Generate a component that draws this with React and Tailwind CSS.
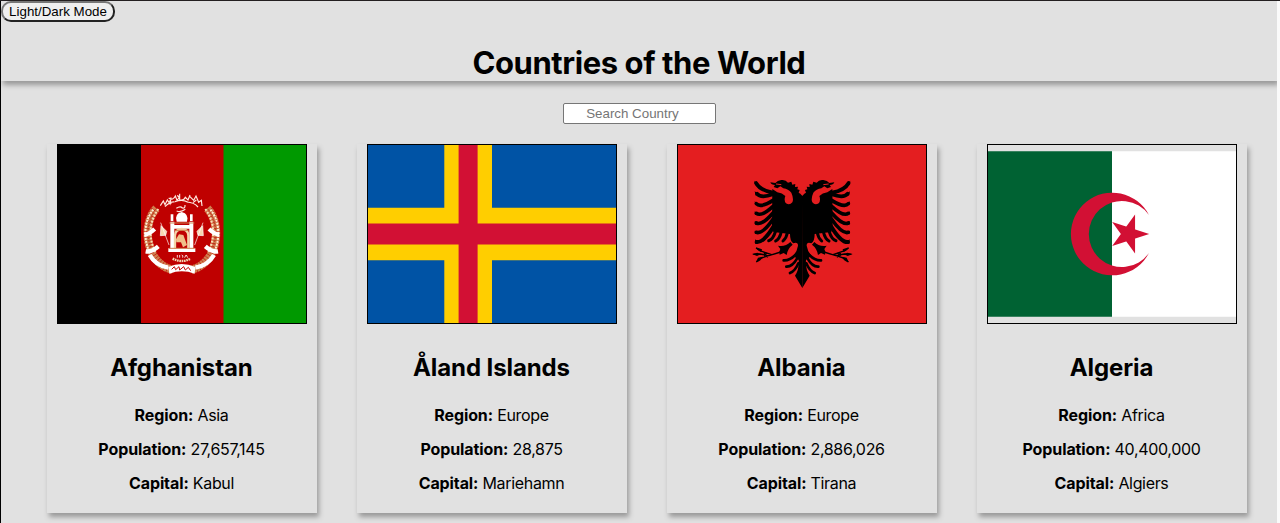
const countries = [
  { name: "Afghanistan", region: "Asia", population: "27,657,145", capital: "Kabul", flag: AfghanFlag },
  { name: "Åland Islands", region: "Europe", population: "28,875", capital: "Mariehamn", flag: AlandFlag },
  { name: "Albania", region: "Europe", population: "2,886,026", capital: "Tirana", flag: AlbaniaFlag },
  { name: "Algeria", region: "Africa", population: "40,400,000", capital: "Algiers", flag: AlgeriaFlag },
];

const flagClass = "block h-[180px] w-[250px] border border-black";

/* One half of the wheat wreath and ribbons; the other half is mirrored. */
function WreathHalf() {
  return (
    <g fill="none" stroke="#fff">
      <path d="M64 70 C38 98 26 155 54 210 Q76 246 112 254" stroke="#cf7f4e" strokeWidth="25" strokeDasharray="8 1.500" />
      <path d="M55 74 C32 100 20 150 45 205" stroke="#fff0d8" strokeWidth="6" strokeDasharray="6 3" />
      <path d="M70 72 C46 105 36 150 62 203" stroke="#f8dfba" strokeWidth="6" strokeDasharray="6 4" />
      <path d="M62 72 C38 105 29 152 54 205" stroke="#b32010" strokeWidth="2" strokeDasharray="5 4" />
      <path d="M28 149 Q42 148 59 132 M32 199 Q50 202 70 184 M44 210 Q62 242 100 248" strokeWidth="13" />
      <path d="M78 122 L95 139 L92 151 L76 152 Z" fill="#f7d7b0" strokeWidth="2" />
      <path d="M77 113 L102 180" strokeWidth="2" />
    </g>
  );
}

function AfghanFlag() {
  return (
    <svg className={flagClass} viewBox="0 0 248 178">
      <path fill="#000" d="M0 0h83v178H0z" />
      <path fill="#bf0000" d="M83 0h83v178H83z" />
      <path fill="#090" d="M165.500 0H248v178h-82.500z" />
      <g transform="translate(77 40) scale(.33333)">
        <WreathHalf />
        <g transform="translate(281 0) scale(-1 1)"><WreathHalf /></g>
        <g fill="none" stroke="#ffe9e0" strokeWidth="3.500">
          <path d="M76 62 l9 -14 5 11 7 -14 8 12 3 -20 M101 39 q13 9 20 -6 l5 13 q12 -11 0 -14 M134 26 v19 q12 3 17 -8 l8 8 6 -15 M164 34 l12 12 7 -13 8 19 8 -6 2 17 M90 65 q16 -16 29 -14 M120 50 q22 -8 38 1 M155 51 q22 1 34 15 M103 47 l6 9 M174 53 l10 -8" />
          <path d="M124 70 q12 -8 18 -1 q9 2 8 -9 M125 78 q12 5 26 -5" />
        </g>
        <g fill="#fff">
          <path d="M100 190 h81 v11 h-81z M106 110 h12 v80 h-12z M163 110 h12 v80 h-12z M107 88 h8 v20 h-8z M165 88 h8 v20 h-8z M118 120 h45 v11 h-45z" />
          <path d="M125 110 Q117 87 140 81 Q163 87 156 110z" />
        </g>
        <path d="M120 190 V151 Q122 133 140 132 Q159 133 160 151 V190" fill="none" stroke="#f2d4a9" strokeWidth="7" />
        <path d="M123 163 l9 -15 13 2 11 30 -12 7 -6 -15 -14 0z" fill="#f0c08a" />
        <path d="M103 114 h75 M119 136 h42 M102 190 h77" stroke="#cf7f4e" strokeWidth="3" />
        <path d="M127 210 v8 m7 -8 v8 m6 -8 q6 1 3 8 m10 -8 l-4 8 m5 -8 l4 8" fill="none" stroke="#fff" strokeWidth="2.500" />
        <path d="M113 221 q28 14 54 0" fill="none" stroke="#f3d8b4" strokeWidth="7" strokeDasharray="5 2" />
        <path d="M100 246 Q140 228 181 246 L179 266 Q140 252 103 266z" fill="#fff" />
        <path d="M110 253 l8 -8 4 9 10 -9 2 10 12 -10 5 10 9 -8 7 10" fill="none" stroke="#bf0000" strokeWidth="3" />
      </g>
    </svg>
  );
}

function AlandFlag() {
  return (
    <svg className={flagClass} viewBox="0 0 248 178">
      <path fill="#0053a5" d="M0 0h248v178H0z" />
      <path fill="#ffce00" d="M76.300 0H124v178H76.300zM0 62.700h248v52.600H0z" />
      <path fill="#d21034" d="M90.600 0h19v178h-19zM0 78.500h248v21H0z" />
    </svg>
  );
}

function EagleHalf() {
  return (
    <g>
      <path d="M188 94 Q180 84 176 83 L179 75 L172 73 L174 65 L165 66 L166 57 L157 59 L154 50 L144 53 Q137 43 124 45 Q112 47 106 54 L91 52 Q94 60 105 60 L101 66 L112 70 L121 64 L130 70 Q145 72 154 83 Q162 101 157 112 Q149 122 138 115 Q131 106 136 93 Q127 84 112 82 L97 72 L96 180 L100 201 L150 207 Q150 229 160 235 Q174 230 174 242 Q172 258 160 272 L176 285 Q178 313 165 332 L187 369z" />
      <path d="M108 57 L124 59" fill="none" stroke="#e41e20" strokeWidth="3" />
      <g fill="none" stroke="#000" strokeWidth="11" strokeLinecap="round">
        <path d="M48 54 Q60 76 98 83 M51 86 Q62 101 99 88 M49 116 Q61 130 99 106 M49 145 Q64 156 99 124 M49 174 Q66 182 99 144 M49 202 Q68 208 99 163" />
        <path d="M50 231 Q70 234 101 184" strokeWidth="12" />
        <path d="M86 227 Q99 224 107 198 M107 228 Q119 222 124 200 M129 228 Q140 218 142 203" strokeWidth="9" />
        <path d="M131 286 Q149 287 166 270 M139 305 Q157 306 171 281 M150 324 Q166 318 175 295" strokeWidth="8" />
      </g>
      <path d="M43 47 L53 56 L46 61z M44 79 L57 88 L47 92z M44 109 L55 117 L46 121z M44 139 L55 146 L46 150z M44 168 L55 176 L46 180z M44 197 L55 204 L46 207z M45 223 L56 232 L46 237z" />
      <path d="M151 231 Q136 246 114 242 L121 252 Q116 260 119 269 L131 264 L140 270 Q143 250 158 239z" />
      <path d="M122 261 L87 272 L61 267 L40 268 M95 269 L62 258 L48 249 M94 269 L59 281 L49 291 M72 264 L83 277 M72 273 L82 263" fill="none" stroke="#000" strokeWidth="4" />
      <path d="M48 247 L66 253 L64 261 Q52 258 48 247 M36 267 L52 263 L62 268 L51 273z M48 292 L54 278 L69 275 Q64 287 48 292" />
    </g>
  );
}

function AlbaniaFlag() {
  return (
    <svg className={flagClass} viewBox="0 0 248 178">
      <path fill="#e41e20" d="M0 0h248v178H0z" />
      <g transform="translate(62 20) scale(.33333)">
        <EagleHalf />
        <g transform="translate(374 0) scale(-1 1)"><EagleHalf /></g>
      </g>
    </svg>
  );
}

function AlgeriaFlag() {
  return (
    <svg className={flagClass} viewBox="0 0 248 178">
      <path fill="#fff" d="M124 6.330h124v165.340H124z" />
      <path fill="#006233" d="M0 6.330h124v165.340H0z" />
      <g transform="translate(124 89) scale(.27556)">
        <path fill="#d21034" d="M134 -69 A150 150 0 1 0 134 69 A120 120 0 1 1 134 -69" />
        <path fill="#d21034" d="M135 0 L0.600 43.700 L83.700 -70.600 V70.600 L0.600 -43.700z" />
      </g>
    </svg>
  );
}

function Field({ label, value }) {
  return (
    <p className="mb-4 pr-px text-base leading-[18px] tracking-[-0.33px]">
      <b className="tracking-[-0.1px]">{label}:</b> {value}
    </p>
  );
}

function CountryCard({ country }) {
  const Flag = country.flag;
  return (
    <article className="h-[369px] w-[270px] px-[10px] text-center shadow-[2px_4px_5px_#999]">
      <Flag />
      <h2 className="mt-[30px] mb-[24px] pr-px text-2xl leading-[28px] font-bold tracking-[-0.1px]">{country.name}</h2>
      <Field label="Region" value={country.region} />
      <Field label="Population" value={country.population} />
      <Field label="Capital" value={country.capital} />
    </article>
  );
}

export default function App() {
  return (
    <div className="h-[523px] overflow-hidden bg-[#fafafa] pr-[3px] font-['Inter',sans-serif] text-black">
      <div className="-mr-[3px] h-px bg-[#231f20]" />
      <main className="h-[522px] overflow-hidden border-l border-black bg-[#e1e1e1]">
        <header className="h-[80px] shadow-[2px_4px_5px_#999]">
          <button className="block h-[21px] w-[114px] rounded-[10px] border-2 border-[#222] border-t-[#767676] border-l-[#767676] bg-[#efefef] font-['Liberation_Sans',sans-serif] text-[13.333px] leading-[17px] whitespace-nowrap">
            Light/Dark Mode
          </button>
          <h1 className="mt-[22px] text-center text-[31px] leading-[38px] font-bold tracking-[-0.42px]">Countries of the World</h1>
        </header>
        <input
          className="mx-auto mt-[22px] block h-[21px] w-[153px] rounded-[2px] border border-[#767676] bg-white pr-[13px] text-center font-['Liberation_Sans',sans-serif] text-[13.333px] placeholder:text-[#757575]"
          placeholder="Search Country"
        />
        <section className="mt-[20px] ml-[46px] flex gap-10">
          {countries.map((country) => (
            <CountryCard key={country.name} country={country} />
          ))}
        </section>
      </main>
    </div>
  );
}
